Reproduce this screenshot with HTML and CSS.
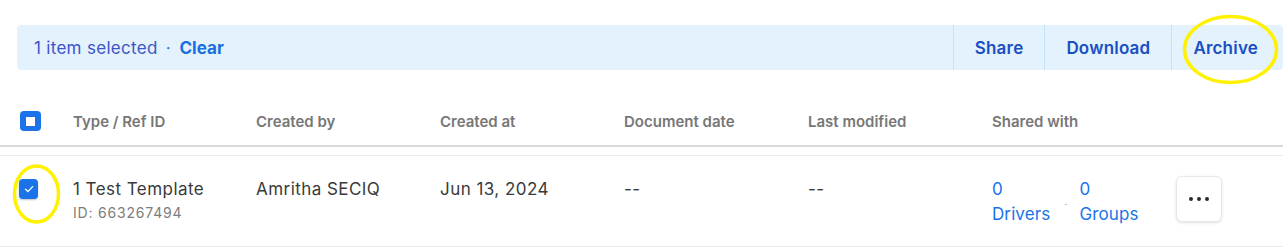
FILE: index.html
```html
<!DOCTYPE html>
<html lang="en">
<head>
<meta charset="utf-8">
<title>Documents</title>
<link rel="stylesheet" href="styles.css">
</head>
<body>
<div class="page">
  <div class="banner">
    <div class="banner-info">
      <span class="count">1 item selected</span>
      <span class="dot">·</span>
      <a class="clear">Clear</a>
    </div>
    <div class="banner-actions">
      <button class="bact">Share</button>
      <button class="bact">Download</button>
      <button class="bact">Archive</button>
    </div>
  </div>

  <div class="table">
    <div class="row head">
      <div class="cell cb-cell"><span class="cb cb-partial"><span class="cb-inner"></span></span></div>
      <div class="cell">Type / Ref ID</div>
      <div class="cell">Created by</div>
      <div class="cell">Created at</div>
      <div class="cell">Document date</div>
      <div class="cell">Last modified</div>
      <div class="cell">Shared with</div>
      <div class="cell"></div>
    </div>
    <div class="row body">
      <div class="cell cb-cell"><span class="cb cb-checked"><svg width="12" height="12" viewBox="0 0 12 12"><path d="M2.5 6.3 L5 8.6 L9.6 3.6" fill="none" stroke="#fff" stroke-width="1.3" stroke-linecap="round" stroke-linejoin="round"/></svg></span></div>
      <div class="cell">
        <div class="title">1 Test Template</div>
        <div class="sub">ID: 663267494</div>
      </div>
      <div class="cell"><div class="title">Amritha SECIQ</div></div>
      <div class="cell"><div class="title">Jun 13, 2024</div></div>
      <div class="cell"><div class="title">--</div></div>
      <div class="cell"><div class="title">--</div></div>
      <div class="cell shared">
        <a class="link">0<br>Drivers</a>
        <span class="sep">-</span>
        <a class="link">0<br>Groups</a>
      </div>
      <div class="cell">
        <button class="kebab"><span></span><span></span><span></span></button>
      </div>
    </div>
  </div>
</div>
<svg class="marks" width="1283" height="248" viewBox="0 0 1283 248">
  <ellipse cx="1230.5" cy="49.5" rx="46" ry="33" fill="none" stroke="#fff200" stroke-width="3.5"/>
  <ellipse cx="36.5" cy="194" rx="22" ry="28" fill="none" stroke="#fff200" stroke-width="3.5"/>
</svg>
</body>
</html>
```

FILE: styles.css
```css
* { box-sizing: border-box; }
html, body { margin: 0; padding: 0; background: #fff; }
body {
  font-family: Inter, "Noto Sans", "Liberation Sans", sans-serif;
  width: 1283px;
  height: 248px;
  overflow: hidden;
  position: relative;
}
.page { padding-top: 25px; }

.banner {
  margin-left: 17px;
  height: 45px;
  background: #e3f2fd;
  border-radius: 4px;
  display: flex;
  align-items: stretch;
  justify-content: space-between;
}
.banner-info {
  display: flex;
  align-items: center;
  padding-left: 17px;
  font-size: 17px;
}
.count { color: #3c55c8; letter-spacing: 0.3px; }
.dot { color: #2f7de1; margin: 0 9px 0 8px; }
.clear { color: #1a6fe0; font-weight: 700; }
.banner-actions { display: flex; align-items: stretch; }
.bact {
  border: 0;
  border-left: 1px solid #c5e3f8;
  background: transparent;
  font-family: inherit;
  font-size: 17px;
  font-weight: 600;
  letter-spacing: 0.2px;
  color: #1a4fc4;
  padding: 0 21px;
  cursor: pointer;
}
.bact:last-child { padding: 0 25px 0 21px; }

.table { margin-top: 27px; }
.row {
  display: grid;
  grid-template-columns: 57px 183px 184px 184px 184px 184px 184px 1fr;
}
.head {
  height: 50px;
  align-items: center;
  border-bottom: 2px solid #d9d9d9;
  font-size: 15px;
  font-weight: 600;
  color: #777;
}
.head .cell { padding-left: 16px; }
.head .cb-cell { padding-left: 20px; }
.body {
  margin-top: 8px;
  border-top: 1px solid #ececec;
  border-bottom: 1px solid #ececec;
  padding: 21px 0 19px;
  align-items: start;
}
.body .cell { padding-left: 16px; }
.body .cb-cell { padding-left: 19px; padding-top: 2px; }

.cb {
  display: flex;
  align-items: center;
  justify-content: center;
  width: 20px;
  height: 20px;
  border-radius: 4px;
  background: #1a73e8;
}
.cb-partial { width: 21px; }
.cb-inner { width: 9px; height: 9px; background: #fff; }
.cb-checked { width: 19px; box-shadow: 0 1px 2px rgba(0,0,0,0.25); }

.title { font-size: 17px; line-height: 24px; color: #3a3a3a; letter-spacing: 0.45px; }
.sub { font-size: 14px; line-height: 24px; color: #7d7d7d; letter-spacing: 0.8px; }

.shared { display: flex; align-items: center; }
.link { color: #1a73e8; font-size: 17px; line-height: 25px; letter-spacing: 0.1px; }
.sep { font-size: 7px; color: #9a9a9a; margin: 4px 12px 0 14px; }

.kebab {
  width: 46px;
  height: 46px;
  margin-top: -1px;
  border: 1px solid #e8e8e8;
  border-radius: 6px;
  background: #fff;
  box-shadow: 0 1px 3px rgba(0,0,0,0.12);
  display: flex;
  align-items: center;
  justify-content: center;
  gap: 4px;
  padding: 0;
}
.kebab span {
  width: 4px;
  height: 4px;
  border-radius: 50%;
  background: #2b2b2b;
}

.marks { position: absolute; left: 0; top: 0; pointer-events: none; }
```
